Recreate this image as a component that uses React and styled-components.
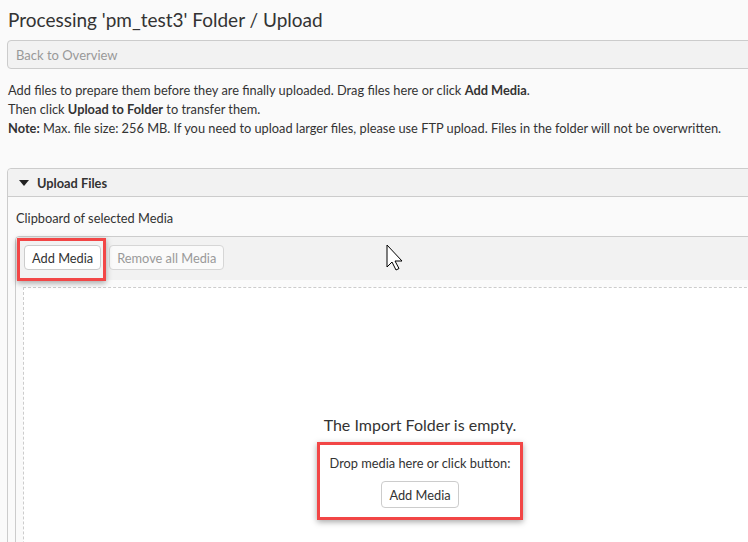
import styled, { createGlobalStyle } from "styled-components";

const GlobalStyle = createGlobalStyle`
	html, body {
		margin: 0;
		padding: 0;
		background-color: #fafafa;
		overflow: hidden;
	}
	body {
		font-family: Lato, "Noto Sans", sans-serif;
		font-size: 12.8px;
		color: #333;
	}
`;

const Page = styled.div`
	width: 826px;
	padding-left: 7px;
`;

const Title = styled.h1`
	margin: 0;
	padding: 6px 0 0 1px;
	font-size: 19px;
	font-weight: 400;
	line-height: 28px;
`;

const BackButton = styled.button`
	display: block;
	width: 100%;
	height: 29px;
	margin-top: 6px;
	padding: 0 8px;
	border: 1px solid #ccc;
	border-radius: 4px;
	background-color: #f2f2f2;
	color: #999;
	font-family: inherit;
	font-size: 13px;
	text-align: left;
`;

const Intro = styled.p`
	margin: 12px 0 0 1px;
	line-height: 19px;
`;

const Panel = styled.div`
	margin-top: 30px;
	border: 1px solid #ccc;
	border-radius: 4px;
	background-color: #fafafa;
`;

const PanelHeader = styled.div`
	display: flex;
	align-items: center;
	gap: 8px;
	height: 27px;
	padding-left: 11px;
	background-color: #f2f2f2;
	border-bottom: 1px solid #ccc;
	border-radius: 4px 4px 0 0;
	font-weight: 700;
`;

const Caret = styled.span`
	width: 0;
	height: 0;
	border-left: 5px solid transparent;
	border-right: 5px solid transparent;
	border-top: 6px solid #222;
`;

const PanelBody = styled.div`
	padding: 12px 7px 0;
`;

const Label = styled.div`
	line-height: 19px;
	padding-left: 1px;
`;

const Clipboard = styled.div`
	margin-top: 8px;
	border: 1px solid #ccc;
	border-radius: 4px;
	background-color: #fafafa;
	padding-bottom: 40px;
`;

const Toolbar = styled.div`
	position: relative;
	display: flex;
	align-items: flex-start;
	gap: 8px;
	height: 43px;
	padding: 8px 8px 0;
	box-sizing: border-box;
	background-color: #f2f2f2;
	border-radius: 4px 4px 0 0;
`;

const Button = styled.button`
	height: ${(props) => props.$h || 25}px;
	padding: 0 7px;
	border: 1px solid ${(props) => (props.disabled ? "#d6d6d6" : "#ccc")};
	border-radius: 4px;
	background-color: ${(props) => (props.disabled ? "#fafafa" : "white")};
	color: ${(props) => (props.disabled ? "#999" : "#333")};
	font-family: inherit;
	font-size: 12.8px;
`;

const Marked = styled.span`
	position: relative;
	display: inline-flex;

	&::after {
		content: "";
		position: absolute;
		top: -7px;
		left: -7px;
		right: -5px;
		bottom: -11px;
		border: 3px solid #f24646;
		box-shadow: 0 2px 6px rgba(0, 0, 0, 0.35);
		pointer-events: none;
	}
`;

const Cursor = styled.svg`
	position: absolute;
	left: 370px;
	top: 7px;
`;

const DropZone = styled.div`
	margin: 7px 7px 0;
	min-height: 300px;
	border: 1px dashed #ccc;
	background-color: white;
	display: flex;
	flex-direction: column;
	align-items: center;
	padding-top: 125px;
`;

const EmptyText = styled.div`
	font-size: 16px;
	line-height: 24px;
`;

const DropHint = styled.div`
	box-sizing: border-box;
	width: 206px;
	margin-top: 5px;
	padding: 9px 0;
	border: 3px solid #f24646;
	box-shadow: 0 2px 6px rgba(0, 0, 0, 0.35);
	display: flex;
	flex-direction: column;
	align-items: center;
	gap: 8px;
	line-height: 19px;
`;

const App = () => {
	return (
		<Page>
			<GlobalStyle />
			<Title>Processing 'pm_test3' Folder / Upload</Title>
			<BackButton>Back to Overview</BackButton>
			<Intro>
				Add files to prepare them before they are finally uploaded. Drag
				files here or click <b>Add Media</b>.
				<br />
				Then click <b>Upload to Folder</b> to transfer them.
				<br />
				<b>Note:</b> Max. file size: 256 MB. If you need to upload larger
				files, please use FTP upload. Files in the folder will not be
				overwritten.
			</Intro>
			<Panel>
				<PanelHeader>
					<Caret />
					Upload Files
				</PanelHeader>
				<PanelBody>
					<Label>Clipboard of selected Media</Label>
					<Clipboard>
						<Toolbar>
							<Marked>
								<Button>Add Media</Button>
							</Marked>
							<Button disabled>Remove all Media</Button>
							<Cursor width="18" height="27" viewBox="0 0 18 27">
								<path
									d="M1 1 L1 23 L6 18 L10 26 L13 24.5 L9 17 L16 17 Z"
									fill="white"
									stroke="black"
									strokeWidth="1"
									strokeLinejoin="miter"
								/>
							</Cursor>
						</Toolbar>
						<DropZone>
							<EmptyText>The Import Folder is empty.</EmptyText>
							<DropHint>
								<span>Drop media here or click button:</span>
								<Button $h={27}>Add Media</Button>
							</DropHint>
						</DropZone>
					</Clipboard>
				</PanelBody>
			</Panel>
		</Page>
	);
};

export default App;
